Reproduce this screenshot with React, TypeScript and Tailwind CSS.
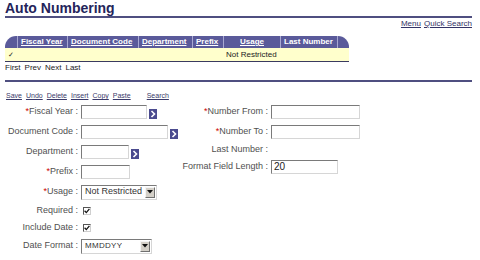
import React from 'react';

const Req = () => <span className="text-[#cc0000]">*</span>;

const TextBox = ({ w, value }: { w: string; value?: string }) => (
  <div
    className={`${w} h-[14px] bg-white border border-t-[#7a7a7a] border-l-[#7a7a7a] border-b-[#d6d6d6] border-r-[#d6d6d6] text-[10px] leading-[12px] pl-[2px] text-[#222]`}
  >
    {value}
  </div>
);

const Lookup = () => (
  <div className="ml-[2px] mt-[3px] w-[8px] h-[10px] bg-[#4b4b8f] flex items-center justify-center">
    <svg width="6" height="8" viewBox="0 0 6 8">
      <path d="M1.5 1 L4.5 4 L1.5 7" fill="none" stroke="white" strokeWidth="1.6" />
    </svg>
  </div>
);

const Select = ({ w, value, text }: { w: string; value: string; text: string }) => (
  <div
    className={`${w} h-[15px] bg-white flex items-center justify-between border border-t-[#7a7a7a] border-l-[#7a7a7a] border-b-[#d6d6d6] border-r-[#d6d6d6]`}
  >
    <span className={`${text} pl-[3px] text-[#333] whitespace-nowrap overflow-hidden`}>{value}</span>
    <div className="shrink-0 w-[10px] h-[11px] mr-[1px] bg-[#d4d0c8] border border-t-[#f4f4f4] border-l-[#f4f4f4] border-b-[#707070] border-r-[#707070] flex items-center justify-center">
      <svg width="6" height="4" viewBox="0 0 6 4">
        <path d="M0 0 H6 L3 3.5 Z" fill="#111" />
      </svg>
    </div>
  </div>
);

const Check = () => (
  <div className="ml-[2px] w-[8px] h-[8px] bg-white border border-t-[#555] border-l-[#555] border-b-[#cfcfcf] border-r-[#cfcfcf] flex items-center justify-center">
    <svg width="6" height="6" viewBox="0 0 6 6">
      <path d="M0.6 2.8 L2.3 4.6 L5.4 0.9" fill="none" stroke="#111" strokeWidth="1.3" />
    </svg>
  </div>
);

const Row = ({ label, h, lw, children }: { label: React.ReactNode; h: string; lw: string; children?: React.ReactNode }) => (
  <div className={`flex items-center ${h}`}>
    <div className={`${lw} text-right text-[9px] text-[#505050] whitespace-nowrap`}>{label}</div>
    <div className="flex items-center ml-[3px]">{children}</div>
  </div>
);

export default function App() {
  const headers = [
    { t: 'Fiscal Year', u: true },
    { t: 'Document Code', u: true },
    { t: 'Department', u: true },
    { t: 'Prefix', u: true },
    { t: 'Usage', u: true, c: true },
    { t: 'Last Number', u: false },
  ];

  return (
    <div className="w-[480px] h-[260px] bg-white overflow-hidden px-[5px]" style={{ fontFamily: '"Liberation Sans", Arial, sans-serif' }}>
      {/* Title */}
      <div className="h-[16px] pt-[1px] text-[14px] leading-[15px] font-bold text-[#24245a]">Auto Numbering</div>
      <div className="w-[467px] h-[2px] bg-[#4f4f80]" />
      <div className="w-[467px] flex justify-end gap-[3px] mt-[1px] text-[8px] leading-[10px] text-[#333366] underline">
        <span>Menu</span>
        <span>Quick Search</span>
      </div>

      {/* Grid */}
      <div className="mt-[7px] w-[344px]">
        <div className="grid grid-cols-[12px_50px_71px_54px_31px_57px_57px_12px] h-[12px] text-[8px] leading-[11px] font-bold text-white">
          <div className="bg-[#5a5a9a] rounded-tl-[11px]" />
          {headers.map((h) => (
            <div
              key={h.t}
              className={`bg-[#5a5a9a] border-l border-[#a8a8d2] px-[3px] whitespace-nowrap ${h.c ? 'text-center' : ''} ${h.u ? 'underline' : ''}`}
            >
              {h.t}
            </div>
          ))}
          <div className="bg-[#5a5a9a] border-l border-[#a8a8d2] rounded-tr-[11px]" />
        </div>
        <div className="grid grid-cols-[12px_50px_71px_54px_31px_57px_57px_12px] h-[14px] bg-[#ffffcc] border-b border-[#3a3a60] text-[8px] leading-[13px] text-[#222]">
          <div className="pl-[3px] text-[7px]">✓</div>
          <div />
          <div />
          <div />
          <div />
          <div className="pl-[3px] whitespace-nowrap">Not Restricted</div>
          <div />
          <div />
        </div>
      </div>
      <div className="flex gap-[4px] mt-[1px] text-[8px] leading-[10px] text-[#222]">
        <span>First</span>
        <span>Prev</span>
        <span>Next</span>
        <span>Last</span>
      </div>
      <div className="w-[467px] h-[2px] bg-[#4f4f80] mt-[7px]" />

      {/* Toolbar */}
      <div className="flex mt-[9px] text-[7px] leading-[10px] text-[#3a3a6a] underline">
        <div className="flex gap-[4px] pl-[1px]">
          <span>Save</span>
          <span>Undo</span>
          <span>Delete</span>
          <span>Insert</span>
          <span>Copy</span>
          <span>Paste</span>
        </div>
        <span className="ml-[16px]">Search</span>
      </div>

      {/* Form */}
      <div className="flex mt-[1px]">
        <div className="w-[175px]">
          <Row label={<><Req />Fiscal Year :</>} h="h-[20px]" lw="w-[73px]">
            <TextBox w="w-[66px]" />
            <Lookup />
          </Row>
          <Row label="Document Code :" h="h-[20px]" lw="w-[73px]">
            <TextBox w="w-[87px]" />
            <Lookup />
          </Row>
          <Row label="Department :" h="h-[20px]" lw="w-[73px]">
            <TextBox w="w-[48px]" />
            <Lookup />
          </Row>
          <Row label={<><Req />Prefix :</>} h="h-[20px]" lw="w-[73px]">
            <TextBox w="w-[49px]" />
          </Row>
          <Row label={<><Req />Usage :</>} h="h-[20px]" lw="w-[73px]">
            <Select w="w-[76px]" value="Not Restricted" text="text-[9px]" />
          </Row>
          <Row label="Required :" h="h-[17px]" lw="w-[73px]">
            <Check />
          </Row>
          <Row label="Include Date :" h="h-[17px]" lw="w-[73px]">
            <Check />
          </Row>
          <Row label="Date Format :" h="h-[20px]" lw="w-[73px]">
            <Select w="w-[71px]" value="MMDDYY" text="text-[8px] tracking-[0.3px]" />
          </Row>
        </div>
        <div>
          <Row label={<><Req />Number From :</>} h="h-[20px]" lw="w-[88px]">
            <TextBox w="w-[89px]" />
          </Row>
          <Row label={<><Req />Number To :</>} h="h-[20px]" lw="w-[88px]">
            <TextBox w="w-[89px]" />
          </Row>
          <Row label="Last Number :" h="h-[16px]" lw="w-[88px]" />
          <Row label="Format Field Length :" h="h-[17px]" lw="w-[88px]">
            <TextBox w="w-[67px]" value="20" />
          </Row>
        </div>
      </div>
    </div>
  );
}
